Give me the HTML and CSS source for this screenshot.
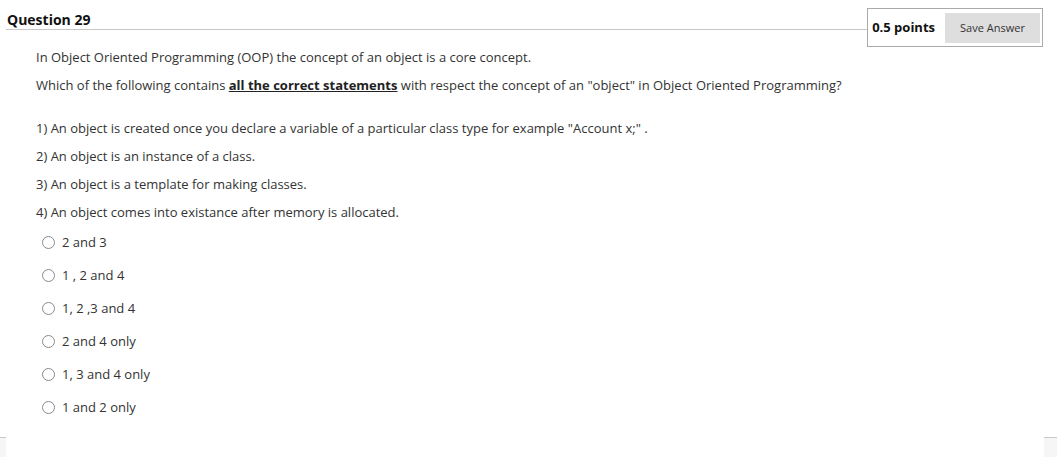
FILE: index.html
```html
<!DOCTYPE html>
<html>
<head>
<meta charset="utf-8">
<link rel="stylesheet" href="styles.css">
</head>
<body>
<div class="page">
  <div class="header">
    <div class="title">Question 29</div>
    <div class="points-box">
      <span class="points">0.5 points</span>
      <button class="save">Save Answer</button>
    </div>
  </div>
  <div class="content">
    <p class="line">In Object Oriented Programming (OOP) the concept of an object is a core concept.</p>
    <p class="line">Which of the following contains <strong class="emph">all the correct statements</strong> with respect the concept of an "object" in Object Oriented Programming?</p>
    <div class="statements">
      <p class="line">1) An object is created once you declare a variable of a particular class type for example "Account x;" .</p>
      <p class="line">2) An object is an instance of a class.</p>
      <p class="line">3) An object is a template for making classes.</p>
      <p class="line">4) An object comes into existance after memory is allocated.</p>
    </div>
    <div class="options">
      <label class="option"><span class="radio"></span><span>2 and 3</span></label>
      <label class="option"><span class="radio"></span><span>1 , 2 and 4</span></label>
      <label class="option"><span class="radio"></span><span>1, 2 ,3 and 4</span></label>
      <label class="option"><span class="radio"></span><span>2 and 4 only</span></label>
      <label class="option"><span class="radio"></span><span>1, 3 and 4 only</span></label>
      <label class="option"><span class="radio"></span><span>1 and 2 only</span></label>
    </div>
  </div>
  <div class="footer">
    <div class="edge left"></div>
    <div class="edge right"></div>
  </div>
</div>
</body>
</html>
```

FILE: styles.css
```css
* { box-sizing: border-box; }
html, body {
  margin: 0;
  padding: 0;
  background: #fff;
  font-family: "Open Sans", "Noto Sans", sans-serif;
  color: #333;
}
.page {
  width: 1057px;
  height: 459px;
  overflow: hidden;
}
.header {
  display: flex;
  align-items: flex-start;
  padding: 0 14px 0 6px;
}
.title {
  flex: 1;
  height: 30px;
  padding-top: 10px;
  padding-left: 1px;
  font-size: 14px;
  line-height: 19px;
  font-weight: 700;
  color: #111;
  border-bottom: 1px solid #c8c8c8;
}
.points-box {
  margin-top: 8px;
  height: 39px;
  border: 1px solid #aaa;
  display: flex;
  align-items: center;
  padding: 0 2px 0 4px;
  gap: 10px;
}
.points {
  font-size: 13px;
  font-weight: 700;
  color: #111;
  margin-top: -2px;
}
.save {
  width: 95px;
  height: 30px;
  border: none;
  background: #dedede;
  font-family: "Open Sans", "Noto Sans", sans-serif;
  font-size: 11px;
  color: #333;
  padding: 0;
  margin-top: 0;
}
.content {
  padding-left: 36px;
  padding-top: 1px;
}
.line {
  margin: 0 0 10px 0;
  font-size: 13px;
  line-height: 18px;
}
.emph {
  font-weight: 700;
  text-decoration: underline;
  color: #222;
}
.statements {
  margin-top: 25px;
}
.options {
  margin-top: 12px;
  margin-left: 6px;
  display: flex;
  flex-direction: column;
  gap: 15px;
}
.option {
  display: flex;
  align-items: center;
  gap: 7px;
  font-size: 13px;
  line-height: 18px;
}
.radio {
  width: 13px;
  height: 13px;
  border: 1px solid #8a8a8a;
  border-radius: 50%;
  background: #fff;
}
.footer {
  margin-top: 21px;
  display: flex;
  justify-content: space-between;
}
.edge {
  height: 20px;
  background: #f6f6f6;
  border-top: 1px solid #c8c8c8;
}
.edge.left { width: 6px; }
.edge.right { width: 13px; }
```
